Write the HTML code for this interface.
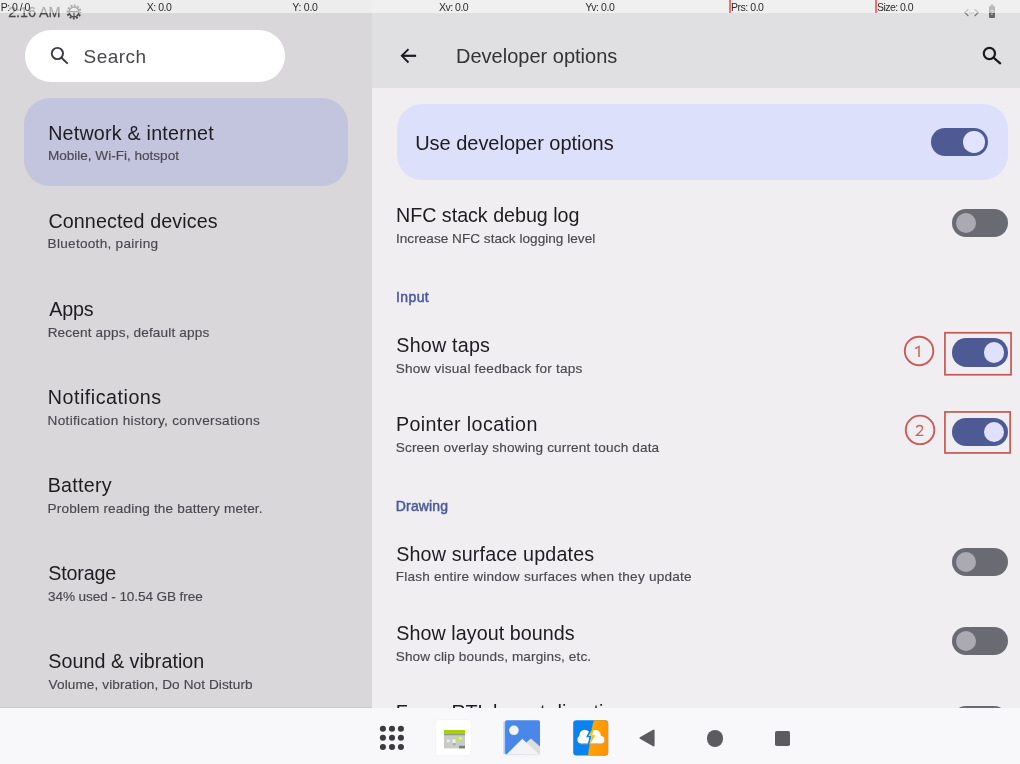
<!DOCTYPE html>
<html><head><meta charset="utf-8">
<style>
*{margin:0;padding:0;box-sizing:border-box}
html,body{width:1020px;height:764px;overflow:hidden;background:#f0eef1;font-family:"Liberation Sans",sans-serif;}
#root{will-change:transform;position:relative;width:1020px;height:764px;overflow:hidden;background:#f0eef1}
.abs{position:absolute}
#left{left:0;top:0;width:372px;height:708px;background:#d9d7da}
#hdr{left:372px;top:0;width:648px;height:87.5px;background:#e0dfe1}
#task{left:0;top:708px;width:1020px;height:56px;background:#f8f7f9}
.x{position:absolute;white-space:nowrap}
.t{color:#1d1c20;font-size:19.7px;line-height:22px}
.s{color:#4a484e;font-size:13.6px;line-height:16px;-webkit-text-stroke:0.15px #4a484e}
.h{color:#333236;font-size:20px;line-height:24px}
.u{color:#1d1c20;font-size:20px;line-height:24px}
.sr{color:#48474b;font-size:19px;line-height:22px}
.cat{color:#4b5b98;font-size:14px;line-height:16px;-webkit-text-stroke:0.5px #4b5b98}
.clk{color:#4a494d;font-size:14.4px;line-height:16px;-webkit-text-stroke:0.25px #4a494d}
.tog{position:absolute;width:56px;height:28.4px;border-radius:14.2px}
.tog.off{background:#6a6a73}
.tog.on{background:#4d5a93}
.tog i{position:absolute;top:4px;width:20.6px;height:20.6px;border-radius:50%}
.tog.off i{left:3.8px;background:#abaab3}
.tog.on i{left:31.9px;background:#dfe1fe}
.redbox{position:absolute;border:1.5px solid #c25b59}
.num{position:absolute;width:30px;height:30px;border-radius:50%;border:1.4px solid #c4605d;color:#c96f6a;font-size:15.5px;line-height:27.5px;text-align:center}
.ov{font-size:10.5px;line-height:12px;color:#2b2b2d}
.rl{position:absolute;top:0;width:1.5px;height:12.8px;background:#f07070}
</style></head><body><div id="root">
<div id="left" class="abs"></div>
<div id="hdr" class="abs"></div>
<div class="abs" style="left:0;top:706.6px;width:372px;height:1.4px;background:#c9c7ca"></div>

<!-- status bar -->
<svg class="abs" style="left:66px;top:3.5px" width="16" height="16" viewBox="0 0 16 16" fill="none"><circle cx="8" cy="8" r="4.9" stroke="#4a494d" stroke-width="1.5"/><circle cx="8" cy="8" r="6.5" stroke="#4a494d" stroke-width="1.9" stroke-dasharray="1.9 1.503" stroke-dashoffset="0.95"/><path d="M3.6 7.6 H12.4 M8 8 V12.6" stroke="#4a494d" stroke-width="1.1"/></svg>
<svg class="abs" style="left:963px;top:7px" width="17" height="11" viewBox="0 0 17 11"><path d="M5.4 2.3 L1.8 5.6 L5.4 8.9 M11.6 2.3 L15.2 5.6 L11.6 8.9" fill="none" stroke="#7d7c80" stroke-width="1.3"/><path d="M6.2 5.6 H11" stroke="#8d8c90" stroke-width="1.1" stroke-dasharray="1 1"/></svg>
<svg class="abs" style="left:988px;top:4px" width="8" height="15" viewBox="0 0 8 15"><rect x="2.6" y="0.6" width="2.8" height="2" fill="#66656a"/><rect x="1" y="2.2" width="6" height="11.8" rx="0.8" fill="#66656a"/><text x="4" y="11" font-size="7.5" text-anchor="middle" fill="#d0d0d2" font-family="Liberation Sans" font-weight="bold">?</text></svg>

<!-- search box -->
<div class="abs" style="left:24.6px;top:29.8px;width:260px;height:52px;border-radius:26px;background:#fff"></div>
<svg class="abs" style="left:49px;top:45px" width="22" height="22" viewBox="0 0 22 22"><circle cx="8.4" cy="8.5" r="5.6" fill="none" stroke="#3a3a42" stroke-width="1.9"/><path d="M12.5 12.7 L18.1 18.1" stroke="#3a3a42" stroke-width="2" stroke-linecap="round"/></svg>

<!-- selected card -->
<div class="abs" style="left:24px;top:98px;width:324px;height:88px;border-radius:26px;background:#c3c5df"></div>

<!-- right header icons -->
<svg class="abs" style="left:399px;top:47px" width="18" height="18" viewBox="0 0 18 18" fill="none" stroke="#1b1a1e"><path d="M17.1 8.8 H3.4" stroke-width="2.2"/><path d="M9.5 2.1 L2.8 8.8 L9.5 15.5" stroke-width="1.9"/></svg>
<svg class="abs" style="left:981px;top:46px" width="22" height="22" viewBox="0 0 22 22"><circle cx="8.4" cy="7.5" r="5.6" fill="none" stroke="#1b1a1e" stroke-width="2.2"/><path d="M12.5 11.6 L19.2 17.4" stroke="#1b1a1e" stroke-width="2.2" stroke-linecap="round"/></svg>

<!-- use developer options card -->
<div class="abs" style="left:396.6px;top:104.2px;width:611.4px;height:76px;border-radius:25px;background:#dde0fb"></div>
<div class="tog on" style="left:931.4px;top:127.9px;width:57px"><i style="left:32px;top:3.6px;width:21.4px;height:21.4px;background:#e1e3ff"></i></div>

<div class="tog off" style="left:952px;top:208.6px"><i></i></div>
<div class="tog on" style="left:952px;top:338.3px"><i></i></div>
<div class="tog on" style="left:952px;top:417.5px"><i></i></div>
<div class="tog off" style="left:952px;top:547.5px"><i></i></div>
<div class="tog off" style="left:952px;top:626.7px"><i></i></div>
<div class="tog off" style="left:952px;top:705.8px"><i></i></div>

<svg class="abs" style="left:895px;top:325px" width="125" height="135" viewBox="895 325 125 135" fill="none">
<rect x="944.95" y="332.75" width="66.1" height="42" stroke="#c35856" stroke-width="1.7"/>
<rect x="944.95" y="411.95" width="65.2" height="41" stroke="#c35856" stroke-width="1.7"/>
<circle cx="919.05" cy="350.95" r="14.25" stroke="#c75c5b" stroke-width="1.9"/>
<circle cx="920.05" cy="429.9" r="14.25" stroke="#c75c5b" stroke-width="1.9"/>
<path d="M915.1 348.6 L919 346.6 V356.9" stroke="#d0706c" stroke-width="1.7" stroke-linejoin="miter"/>
<path d="M916.5 427.8 C916.6 426.2 917.8 425.5 919.4 425.5 C921.2 425.5 922.5 426.5 922.5 428.1 C922.5 429.6 921.6 430.7 920 432.1 L916.6 435.3 H923.4" stroke="#cb6361" stroke-width="1.35"/>
</svg>
<div id="lt1" class="x t" style="left:48.13px;top:121.77px;letter-spacing:0.215px">Network &amp; internet</div>
<div id="ls1" class="x s" style="left:47.90px;top:148.19px;letter-spacing:-0.018px">Mobile, Wi-Fi, hotspot</div>
<div id="lt2" class="x t" style="left:48.41px;top:209.87px;letter-spacing:0.108px">Connected devices</div>
<div id="ls2" class="x s" style="left:47.59px;top:236.49px;letter-spacing:0.275px">Bluetooth, pairing</div>
<div id="lt3" class="x t" style="left:49.23px;top:297.97px;letter-spacing:-0.173px">Apps</div>
<div id="ls3" class="x s" style="left:47.65px;top:324.59px;letter-spacing:0.153px">Recent apps, default apps</div>
<div id="lt4" class="x t" style="left:47.69px;top:385.97px;letter-spacing:0.521px">Notifications</div>
<div id="ls4" class="x s" style="left:47.54px;top:412.59px;letter-spacing:0.321px">Notification history, conversations</div>
<div id="lt5" class="x t" style="left:47.72px;top:473.97px;letter-spacing:0.252px">Battery</div>
<div id="ls5" class="x s" style="left:47.61px;top:500.59px;letter-spacing:0.172px">Problem reading the battery meter.</div>
<div id="lt6" class="x t" style="left:48.15px;top:561.97px;letter-spacing:-0.139px">Storage</div>
<div id="ls6" class="x s" style="left:48.07px;top:588.59px;letter-spacing:-0.110px">34% used - 10.54 GB free</div>
<div id="lt7" class="x t" style="left:48.24px;top:649.97px;letter-spacing:0.041px">Sound &amp; vibration</div>
<div id="ls7" class="x s" style="left:48.61px;top:676.59px;letter-spacing:0.093px">Volume, vibration, Do Not Disturb</div>
<div id="hd" class="x h" style="left:456.02px;top:43.97px;letter-spacing:0.004px">Developer options</div>
<div id="ud" class="x u" style="left:415.19px;top:130.57px;letter-spacing:-0.027px">Use developer options</div>
<div id="rt1" class="x t" style="left:396.05px;top:203.87px;letter-spacing:-0.027px">NFC stack debug log</div>
<div id="rs1" class="x s" style="left:396.01px;top:230.69px;letter-spacing:0.018px">Increase NFC stack logging level</div>
<div id="c1" class="x cat" style="left:395.98px;top:289.25px;letter-spacing:0.413px">Input</div>
<div id="rt2" class="x t" style="left:396.34px;top:334.17px;letter-spacing:0.211px">Show taps</div>
<div id="rs2" class="x s" style="left:395.75px;top:360.59px;letter-spacing:0.212px">Show visual feedback for taps</div>
<div id="rt3" class="x t" style="left:395.92px;top:413.17px;letter-spacing:0.385px">Pointer location</div>
<div id="rs3" class="x s" style="left:395.75px;top:439.59px;letter-spacing:0.143px">Screen overlay showing current touch data</div>
<div id="c2" class="x cat" style="left:395.86px;top:498.45px;letter-spacing:0.124px">Drawing</div>
<div id="rt4" class="x t" style="left:396.20px;top:542.77px;letter-spacing:0.167px">Show surface updates</div>
<div id="rs4" class="x s" style="left:395.63px;top:569.39px;letter-spacing:0.217px">Flash entire window surfaces when they update</div>
<div id="rt5" class="x t" style="left:396.27px;top:621.97px;letter-spacing:0.060px">Show layout bounds</div>
<div id="rs5" class="x s" style="left:395.71px;top:648.59px;letter-spacing:0.117px">Show clip bounds, margins, etc.</div>
<div id="rt6" class="x t" style="left:395.83px;top:700.97px;letter-spacing:-0.015px">Force RTL layout direction</div>
<div id="sr" class="x sr" style="left:83.54px;top:45.82px;letter-spacing:0.454px">Search</div>
<div id="clk" class="x clk" style="left:8.17px;top:3.81px;letter-spacing:-0.068px">2:16 AM</div>

<!-- taskbar -->
<div id="task" class="abs"></div>
<svg class="abs" style="left:376px;top:722px" width="32" height="32" viewBox="0 0 32 32" fill="#3b3a3e">
<circle cx="6.9" cy="6.7" r="3.05"/><circle cx="16" cy="6.7" r="3.05"/><circle cx="24.9" cy="6.7" r="3.05"/>
<circle cx="6.9" cy="15.7" r="3.05"/><circle cx="16" cy="15.7" r="3.05"/><circle cx="24.9" cy="15.7" r="3.05"/>
<circle cx="6.9" cy="25" r="3.05"/><circle cx="16" cy="25" r="3.05"/><circle cx="24.9" cy="25" r="3.05"/></svg>
<!-- icon 2 white tile -->
<div class="abs" style="left:435.9px;top:720.1px;width:34.9px;height:35.3px;border-radius:3.2px;background:#fff;box-shadow:0 0 2px rgba(0,0,0,0.06)"></div>
<svg class="abs" style="left:443.8px;top:729.5px" width="21" height="19" viewBox="0 0 21 19">
<rect x="0" y="0" width="21" height="18.4" fill="#c9cbc6"/>
<rect x="0" y="0" width="21" height="4.2" fill="#a5d108"/>
<rect x="0" y="4.2" width="21" height="1" fill="#8a8d86"/>
<rect x="11" y="6.5" width="6.5" height="4.5" fill="#c2e070"/>
<rect x="3" y="9.5" width="2.6" height="2.6" fill="#eef0ec"/><rect x="8.5" y="9.5" width="3" height="3.4" fill="#eef0ec"/><rect x="15.5" y="7" width="2" height="2.5" fill="#e4f1c0"/>
<rect x="9" y="13" width="2.5" height="2.2" fill="#a9aba6"/>
<rect x="15" y="15.8" width="6" height="2.6" fill="#7b7d78"/>
</svg>
<!-- icon 3 photos -->
<svg class="abs" style="left:503px;top:720px" width="38" height="38" viewBox="0 0 38 38">
<defs><clipPath id="pc"><rect x="2.1" y="0.3" width="34.9" height="34.3" rx="1.6"/></clipPath></defs>
<rect x="0.4" y="1.6" width="2.2" height="32.4" fill="#b3cffb"/>
<g clip-path="url(#pc)">
<rect x="0" y="0" width="38" height="38" fill="#4987e9"/>
<circle cx="10.9" cy="10.3" r="4.8" fill="#f4f4f4"/>
<path d="M27.8 18.4 L37.2 26.6 V36 H22 L23.6 22.2 Z" fill="#dedede"/>
<path d="M19.3 18.7 L37.2 35.4 V36 H2 Z" fill="#f3f3f3"/>
</g>
<path d="M4 34.6 H37 V35.6 L35 36.6 H3 Z" fill="#f4f4f4"/>
</svg>
<!-- icon 4 cloud -->
<svg class="abs" style="left:572.5px;top:720px" width="36" height="36" viewBox="0 0 36 36">
<defs><clipPath id="cc"><rect x="0.2" y="0.3" width="35" height="35.2" rx="3.2"/></clipPath>
<linearGradient id="og" x1="0" y1="0" x2="1" y2="0.3"><stop offset="0.3" stop-color="#ffa400"/><stop offset="1" stop-color="#ff9400"/></linearGradient></defs>
<g clip-path="url(#cc)">
<rect width="36" height="36" fill="#0b83ee"/>
<path d="M20.9 0 H36 V36 H14.9 L15.6 30.5 L18.4 16.8 L14.2 16.4 L18.7 8.5 Z" fill="url(#og)"/>
<g fill="#fff"><circle cx="11.8" cy="15.2" r="5.4"/><circle cx="22.6" cy="15" r="5"/><circle cx="8.3" cy="19.6" r="3.9"/><circle cx="27.6" cy="19.7" r="3.8"/><rect x="8.3" y="15" width="19.3" height="8.5"/></g>
<path d="M7.5 24 H28.2" stroke="#b9a48a" stroke-width="0.9" opacity="0.75"/>
<path d="M17.6 8.6 L13 17.2 H16.4 L14.4 25.4 L16 25.4 L18.6 16 L15.6 15.8 L19.2 9.6 Z" fill="#0b83ee"/>
<path d="M19.3 9.8 L16 15.6 L18.8 16 L16.2 25.2 L22.4 15.4 L19.2 15 L20.6 10.6 Z" fill="#f6c313"/>
</g></svg>
<!-- nav -->
<svg class="abs" style="left:638px;top:728px" width="20" height="20" viewBox="0 0 20 20"><path d="M15.6 2.6 V17.4 L2.4 10 Z" fill="#5c5b5f" stroke="#5c5b5f" stroke-width="2" stroke-linejoin="round"/></svg>
<div class="abs" style="left:706.7px;top:730px;width:16.6px;height:16.6px;border-radius:50%;background:#5c5b5f"></div>
<div class="abs" style="left:774.9px;top:730.6px;width:15.3px;height:15.1px;border-radius:1.8px;background:#5c5b5f"></div>

<!-- pointer overlay -->
<div class="abs" style="left:0;top:0;width:1020px;height:13px;background:rgba(255,255,255,0.54)"></div>
<div class="rl" style="left:729.1px"></div><div class="rl" style="left:875.2px"></div>
<div id="o1" class="x ov" style="left:0.68px;top:0.66px;letter-spacing:-0.518px">P: 0 / 0</div>
<div id="o2" class="x ov" style="left:146.84px;top:0.66px;letter-spacing:-0.484px">X: 0.0</div>
<div id="o3" class="x ov" style="left:292.36px;top:0.66px;letter-spacing:-0.261px">Y: 0.0</div>
<div id="o4" class="x ov" style="left:439.02px;top:0.66px;letter-spacing:-0.503px">Xv: 0.0</div>
<div id="o5" class="x ov" style="left:585.24px;top:0.66px;letter-spacing:-0.436px">Yv: 0.0</div>
<div id="o6" class="x ov" style="left:730.97px;top:0.66px;letter-spacing:-0.456px">Prs: 0.0</div>
<div id="o7" class="x ov" style="left:877.04px;top:0.66px;letter-spacing:-0.549px">Size: 0.0</div>
</div></body></html>
